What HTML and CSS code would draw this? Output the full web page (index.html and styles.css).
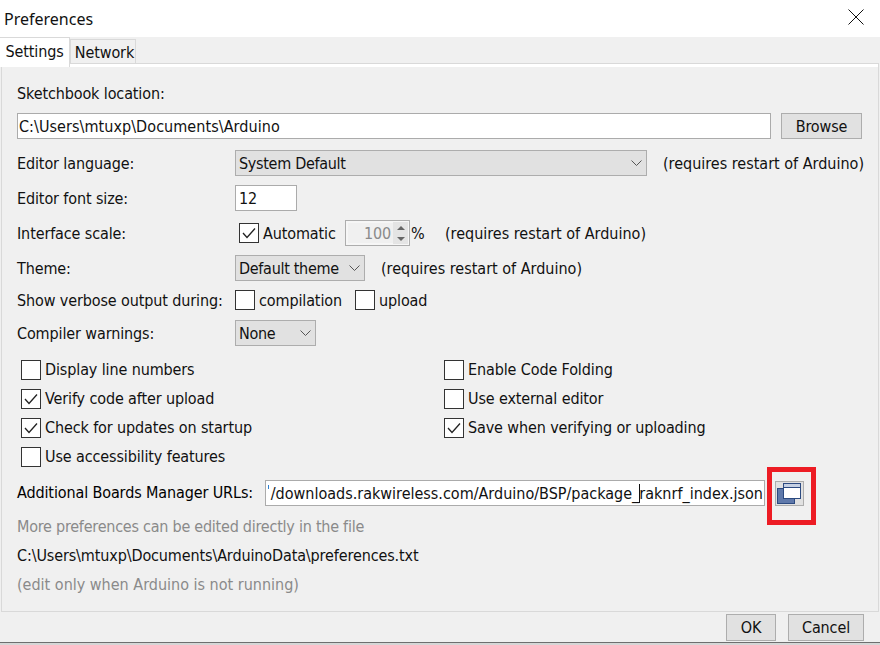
FILE: index.html
```html
<!DOCTYPE html>
<html lang="en">
<head>
    <meta charset="UTF-8">
    <meta name="viewport" content="width=device-width, initial-scale=1.0">
    <title>Preferences</title>
    <link rel="stylesheet" href="styles.css">
</head>
<body>
    <div class="titlebar">
        <span class="title">Preferences</span>
        <svg class="close-icon" width="16" height="16" viewBox="0 0 16 16"><path d="M0.5 0.5L15.5 15.5M15.5 0.5L0.5 15.5" stroke="#111" fill="none"/></svg>
    </div>

    <div class="tabs">
        <div class="tab tab-active">Settings</div>
        <div class="tab tab-network">Network</div>
    </div>

    <div class="panel">
        <div class="row row-label">Sketchbook location:</div>
        <div class="row row-path">
            <div class="field field-path">C:\Users\mtuxp\Documents\Arduino</div>
            <div class="btn btn-browse">Browse</div>
        </div>
        <div class="row row-lang">
            <div class="label">Editor language:</div>
            <div class="select select-lang">
                <span>System Default</span>
                <svg class="chevron" width="11" height="6" viewBox="0 0 11 6"><path d="M0.5 0.5L5.5 5.5L10.5 0.5" stroke="#555" fill="none"/></svg>
            </div>
            <span class="note note-lang">(requires restart of Arduino)</span>
        </div>
        <div class="row">
            <div class="label">Editor font size:</div>
            <div class="field field-size">12</div>
        </div>
        <div class="row">
            <div class="label">Interface scale:</div>
            <label class="check check-auto">
                <span class="box"><svg width="18" height="18" viewBox="0 0 18 18"><path d="M3 9L7 13.5L15 4.5" stroke="#222" stroke-width="1.3" fill="none"/></svg></span>
                Automatic
            </label>
            <div class="spinner">
                <span class="spinner-value">100</span>
                <div class="spinner-arrows">
                    <span class="arrow-up"></span>
                    <span class="arrow-down"></span>
                </div>
            </div>
            <span class="percent">%</span>
            <span class="note">(requires restart of Arduino)</span>
        </div>
        <div class="row">
            <div class="label">Theme:</div>
            <div class="select select-theme">
                <span>Default theme</span>
                <svg class="chevron" width="11" height="6" viewBox="0 0 11 6"><path d="M0.5 0.5L5.5 5.5L10.5 0.5" stroke="#555" fill="none"/></svg>
            </div>
            <span class="note note-theme">(requires restart of Arduino)</span>
        </div>
        <div class="row row-verbose">
            <div class="label">Show verbose output during:</div>
            <label class="check check-compilation"><span class="box"></span>compilation</label>
            <label class="check"><span class="box"></span>upload</label>
        </div>
        <div class="row row-warnings">
            <div class="label">Compiler warnings:</div>
            <div class="select select-warn">
                <span>None</span>
                <svg class="chevron" width="11" height="6" viewBox="0 0 11 6"><path d="M0.5 0.5L5.5 5.5L10.5 0.5" stroke="#555" fill="none"/></svg>
            </div>
        </div>

        <div class="options">
            <label class="check"><span class="box"></span>Display line numbers</label>
            <label class="check"><span class="box"></span>Enable Code Folding</label>
            <label class="check"><span class="box"><svg width="18" height="18" viewBox="0 0 18 18"><path d="M3 9L7 13.5L15 4.5" stroke="#222" stroke-width="1.3" fill="none"/></svg></span>Verify code after upload</label>
            <label class="check"><span class="box"></span>Use external editor</label>
            <label class="check"><span class="box"><svg width="18" height="18" viewBox="0 0 18 18"><path d="M3 9L7 13.5L15 4.5" stroke="#222" stroke-width="1.3" fill="none"/></svg></span>Check for updates on startup</label>
            <label class="check"><span class="box"><svg width="18" height="18" viewBox="0 0 18 18"><path d="M3 9L7 13.5L15 4.5" stroke="#222" stroke-width="1.3" fill="none"/></svg></span>Save when verifying or uploading</label>
            <label class="check"><span class="box"></span>Use accessibility features</label>
        </div>

        <div class="row row-urls">
            <div class="label-urls">Additional Boards Manager URLs:</div>
            <div class="field field-urls"><span>/downloads.rakwireless.com/Arduino/BSP/package_<i class="caret"></i>raknrf_index.json</span></div>
            <div class="btn btn-window">
                <svg width="27" height="23" viewBox="0 0 27 23">
                    <rect x="1.5" y="6.5" width="17" height="15" fill="#5f79ab" stroke="#2c4a80"/>
                    <rect x="7.5" y="1.5" width="17" height="15" fill="#fff" stroke="#2c4a80"/>
                    <rect x="8" y="2" width="16" height="3" fill="#c5d0e3"/>
                    <path d="M8 5.5H24" stroke="#2c4a80"/>
                </svg>
            </div>
        </div>

        <div class="info info-muted info-more">More preferences can be edited directly in the file</div>
        <div class="info">C:\Users\mtuxp\Documents\ArduinoData\preferences.txt</div>
        <div class="info info-muted">(edit only when Arduino is not running)</div>

        <div class="highlight"></div>
    </div>

    <div class="footer">
        <div class="btn btn-ok">OK</div>
        <div class="btn btn-cancel">Cancel</div>
    </div>
</body>
</html>
```

FILE: styles.css
```css
html, body {
    height: 645px;
    overflow: hidden;
}

body {
    font-family: "DejaVu Sans Condensed", "Noto Sans", sans-serif;
    font-size: 16px;
    letter-spacing: -0.12px;
    background-color: #f0f0f0;
    margin: 0;
    color: #111;
    box-sizing: border-box;
    border-bottom: 2px solid #d6d6d6;
}

.titlebar {
    height: 37px;
    background-color: #fff;
    display: flex;
    align-items: center;
    justify-content: space-between;
    padding: 0 16px 0 4px;
    box-sizing: border-box;
}

.title {
    font-family: "Noto Sans", sans-serif;
    font-size: 16px;
    letter-spacing: 0;
}

.close-icon {
    margin-top: -3px;
}

.tabs {
    height: 26px;
    display: flex;
    align-items: flex-end;
    position: relative;
    z-index: 1;
}

.tab {
    height: 24px;
    line-height: 25px;
    width: 66px;
    box-sizing: border-box;
    text-align: center;
    border: 1px solid #d9d9d9;
    border-bottom: none;
    background-color: #f0f0f0;
}

.tab-active {
    height: 30px;
    line-height: 27px;
    width: 70px;
    background-color: #fff;
    margin-bottom: -4px;
    border-left: none;
}

.tab-network {
    padding-left: 3px;
}

.panel {
    position: relative;
    height: 549px;
    box-sizing: border-box;
    margin-left: 1px;
    width: 878px;
    border: 1px solid #d9d9d9;
    box-shadow: inset 0 3px 0 #fff;
    padding: 18px 15px 0 15px;
}

.row {
    display: flex;
    align-items: center;
    height: 26px;
    margin-top: 9px;
}

.row-label {
    height: 22px;
    margin-top: 0;
}

.row-lang {
    margin-top: 11px;
}

.row-verbose {
    margin-top: 6px;
}

.row-warnings {
    margin-top: 7px;
}

.label {
    width: 218px;
    flex: none;
}

.field {
    height: 26px;
    box-sizing: border-box;
    background-color: #fff;
    border: 1px solid #ababab;
    padding: 0 1px;
    line-height: 26px;
    white-space: nowrap;
}

.field-path {
    width: 754px;
    letter-spacing: 0.06px;
}

.field-size {
    width: 62px;
    padding-left: 3px;
}

.field-urls {
    position: relative;
    width: 500px;
    display: flex;
    justify-content: flex-end;
    overflow: hidden;
    letter-spacing: 0;
}

/* bout du slash coupe a gauche */
.field-urls::before {
    content: "";
    position: absolute;
    left: 2px;
    top: 4px;
    width: 1px;
    height: 4px;
    background-color: #2f80d0;
}

.caret {
    display: inline-block;
    width: 1px;
    height: 19px;
    margin-right: -1px;
    background-color: #111;
    vertical-align: -4px;
}

.btn {
    box-sizing: border-box;
    background-color: #e1e1e1;
    border: 1px solid #adadad;
    display: flex;
    align-items: center;
    justify-content: center;
}

.btn-browse {
    width: 81px;
    height: 26px;
    margin-left: 10px;
}

.btn-window {
    width: 29px;
    height: 25px;
    margin-left: 10px;
}

.btn-ok {
    width: 50px;
    height: 27px;
}

.btn-cancel {
    width: 76px;
    height: 27px;
}

.select {
    height: 26px;
    box-sizing: border-box;
    background-color: #e1e1e1;
    border: 1px solid #adadad;
    padding: 0 4px 0 3px;
    display: flex;
    align-items: center;
    justify-content: space-between;
    flex: none;
    letter-spacing: -0.3px;
}

.select-lang {
    width: 412px;
}

.select-theme {
    width: 130px;
}

.select-warn {
    width: 81px;
}

.note {
    white-space: nowrap;
    letter-spacing: 0;
}

.note-lang, .note-theme {
    margin-left: 16px;
}

.check {
    display: flex;
    align-items: center;
    white-space: nowrap;
}

.box {
    width: 20px;
    height: 20px;
    box-sizing: border-box;
    background-color: #fff;
    border: 1px solid #333;
    margin-right: 4px;
    flex: none;
}

.box svg {
    display: block;
}

.check-auto {
    width: 106px;
    margin-left: 4px;
    flex: none;
}

.check-compilation {
    width: 120px;
}

.spinner {
    width: 65px;
    height: 26px;
    box-sizing: border-box;
    border: 1px solid #adadad;
    box-shadow: inset 0 0 0 2px #f6f6f6;
    display: flex;
    align-items: center;
    justify-content: flex-end;
    padding-right: 1px;
    flex: none;
}

.spinner-value {
    color: #8a8a8a;
    margin-right: 2px;
}

.spinner-arrows {
    width: 15px;
    height: 22px;
    background-color: #e4e4e4;
    display: flex;
    flex-direction: column;
    align-items: center;
    justify-content: space-around;
}

.arrow-up, .arrow-down {
    width: 0;
    height: 0;
    border-left: 4px solid transparent;
    border-right: 4px solid transparent;
}

.arrow-up {
    border-bottom: 4px solid #666;
}

.arrow-down {
    border-top: 4px solid #666;
}

.percent {
    width: 34px;
    margin-left: 1px;
    flex: none;
}

.options {
    display: grid;
    grid-template-columns: 423px 1fr;
    grid-auto-rows: 29px;
    margin-top: 9px;
    padding-left: 4px;
}

.row-urls {
    margin-top: 9px;
}

.label-urls {
    width: 248px;
    flex: none;
    line-height: 28px;
    color: #000;
}

.info {
    height: 29px;
    line-height: 30px;
}

.row-urls + .info {
    margin-top: 6px;
}

.info-muted {
    color: #8a8a8a;
    letter-spacing: 0;
}

.info-more {
    letter-spacing: -0.24px;
}

.highlight {
    position: absolute;
    left: 765px;
    top: 403px;
    width: 49px;
    height: 58px;
    box-sizing: border-box;
    border: 5px solid #ed1c24;
}

.footer {
    display: flex;
    justify-content: flex-end;
    gap: 12px;
    padding: 2px 16px 0 0;
    height: 31px;
    box-sizing: border-box;
    border-bottom: 1px solid #6e6e6e;
}
```
